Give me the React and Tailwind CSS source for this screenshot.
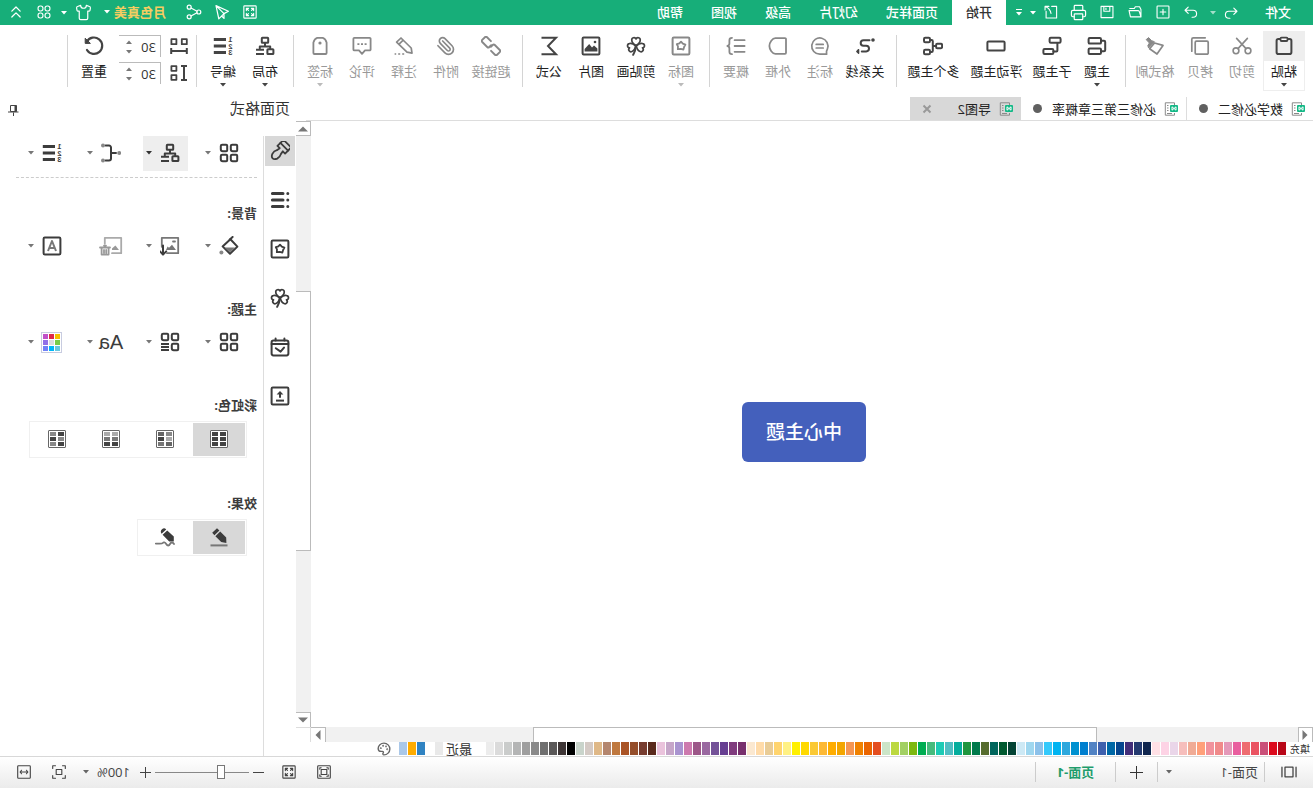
import React, { useState } from 'react'
import clsx from 'clsx'
import { Printer, Shirt, ChevronsUp, Paperclip, Palette } from 'lucide-react'

// ---------- icons (20x20 grid) ----------

function Svg({ children, sw = 2, className = 'size-5' }) {
  return (
    <svg viewBox="0 0 20 20" className={clsx('shrink-0', className)} fill="none" stroke="currentColor" strokeWidth={sw} strokeLinecap="round" strokeLinejoin="round" aria-hidden="true">
      {children}
    </svg>
  )
}

function Caret({ className = 'text-[#444]' }) {
  return (
    <svg viewBox="0 0 6 4" className={clsx('w-1.5 h-1 shrink-0', className)} fill="currentColor" aria-hidden="true">
      <path d="M0 0h6L3 3.5z" />
    </svg>
  )
}

const HEART = 'M10 9.4C7.4 8 5.8 6.200 5.800 4.200A2.200 2.200 0 0 1 10 3a2.200 2.200 0 0 1 4.200 1.200c0 2-1.600 3.800-4.200 5.200z'
const FLOWER = 'M10 6.4l1.3 1.5 2 .5-1 1.7.1 2-2.4-.2-1.9 1-.7-2.1-1.2-1.7 2.2-.9z'
const TILE = 'q0-1 1-1h4q1.400 0 1.400 1.200v3.200q0 2-2 2h-3.400q-1 0-1-1z'
const CHAIN = 'M6.500 13.400H1a1.500 1.500 0 0 1-1.500-1.500V8.100A1.500 1.500 0 0 1 1 6.600h7a1.500 1.500 0 0 1 1.500 1.500v2.600'

const ICONS = {
  paste: <Svg><rect x="2.6" y="3" width="14.8" height="15" rx="1.8" /><rect x="6.5" y="1.6" width="7" height="3.4" rx="1" fill="white" strokeWidth="1.8" /></Svg>,
  cut: <Svg sw={1.6}><circle cx="4" cy="14.8" r="2.9" /><circle cx="16" cy="14.8" r="2.9" /><path d="M6 12.6L15.4 2.4M14 12.6L4.6 2.4" /></Svg>,
  copy: <Svg sw={1.7}><rect x="1.8" y="5.2" width="13" height="13" rx="1.2" /><path d="M4.8 1.8h11.9a1.5 1.5 0 0 1 1.5 1.5v11.9" /></Svg>,
  brush: <Svg sw={1.7}><path d="M10.5 7L2 9.400 8 18l7.400-5.200z" /><path d="M10.800 6l5.600 6 .8-2.400-1.600-2.600L18.800 3.600 16.400 1.600 13.600 4.400z" fill="currentColor" strokeWidth="1" /></Svg>,
  topic: <Svg><rect x="6" y="2" width="12.4" height="5.6" rx="1.2" /><rect x="6" y="12.4" width="12.4" height="5.6" rx="1.2" /><path d="M6 4.8H3a1.2 1.2 0 0 0-1.2 1.2v8a1.2 1.2 0 0 0 1.2 1.2h3" /></Svg>,
  subtopic: <Svg><rect x="1.4" y="1.8" width="11" height="5" rx="1.2" /><rect x="8.6" y="13" width="10" height="5" rx="1.2" /><path d="M4.6 7v7.4a1 1 0 0 0 1 1h3" /></Svg>,
  floating: <Svg><rect x="1.4" y="5.4" width="17.2" height="9.2" rx="1.2" /></Svg>,
  multi: <Svg><rect x=".9" y="7.8" width="6" height="4.4" rx="1.2" /><rect x="13" y="1.8" width="6" height="4.4" rx="1.2" /><rect x="13" y="13.8" width="6" height="4.4" rx="1.2" /><path d="M7 10h3.2M13 4h-1.6a1.2 1.2 0 0 0-1.2 1.2v9.6A1.2 1.2 0 0 0 11.4 16H13" /></Svg>,
  relation: <Svg><path d="M5.500 4.2h6a2.8 2.8 0 0 1 0 5.6H8.8a2.8 2.8 0 0 0 0 5.6h4.4" /><circle cx="2" cy="4" r="1" fill="currentColor" strokeWidth="1.600" /><path d="M16.4 13.6l1.8 1.8-1.8 1.8z" fill="currentColor" strokeWidth="1.4" /></Svg>,
  callout: <Svg sw={1.7}><path d="M3.4 18.2h6.8a8.1 8.1 0 1 0-7.6-5.2c.4 1.2.9 1.6.9 2.8z" /><path d="M6.8 8.4h7M6.8 12h7" /></Svg>,
  boundary: <Svg sw={1.8}><path d="M3 2.2h9.600c3 0 6 4.200 6 7.800s-3 7.800-6 7.800H3a1 1 0 0 1-1-1V3.200a1 1 0 0 1 1-1z" /></Svg>,
  summary: <Svg sw={1.8}><path d="M1.4 4.2h10M1.4 10h10M1.4 15.800h10M14 1.800c2.200 0 2.600.8 2.600 2.400v3.400c0 1.400.6 2.200 2 2.400-1.400.2-2 1-2 2.400v3.400c0 1.600-.4 2.400-2.600 2.400" /></Svg>,
  flowerBox: <Svg><rect x="1.600" y="1.600" width="16.800" height="16.800" rx="1.200" /><path d="M10 5.600l1.600 1.800 2.600.8-1.200 2.200.2 2.800-3-.4-2.600.8-.8-2.800L5.600 8.600l2.600-1z" strokeWidth="1.800" /></Svg>,
  clover: <Svg sw={1.7}><path d={HEART} /><path d={HEART} transform="rotate(-108 10 9.800)" /><path d={HEART} transform="rotate(108 10 9.800)" /><path d="M10 10c.4 3.600 1.200 6.200 2.800 8.800" strokeWidth="2" /></Svg>,
  picture: <Svg><rect x="1.600" y="1.600" width="16.800" height="16.800" rx="1" /><path d="M3.600 15.500v-3L7 9.500l2 2 2.800-3.500 4.600 5v2.500z" fill="currentColor" stroke="none" /><circle cx="6" cy="6" r="1.300" fill="currentColor" stroke="none" /></Svg>,
  formula: <Svg><path d="M17.500 1.800H3l8 8.200-8 8.200h14.500" strokeLinejoin="miter" strokeLinecap="butt" /></Svg>,
  link: <Svg sw={1.9}><g transform="rotate(-45 10 10)"><path d={CHAIN} /><path d={CHAIN} transform="rotate(180 10 10)" /></g></Svg>,
  note: <Svg sw={1.7}><path d="M2 17.200l.8-5.200L13 2l4.400 4.200L7 16.200zM10.800 4.200l4.400 4.200" /><path d="M9.800 18h9.600" strokeDasharray="2 2" strokeLinecap="butt" /></Svg>,
  comment: <Svg sw={1.8}><path d="M2.400 1.800h15.200a1 1 0 0 1 1 1v10.600a1 1 0 0 1-1 1H13l-3 3.400-3-3.400H2.400a1 1 0 0 1-1-1V2.800a1 1 0 0 1 1-1z" /><path d="M5.400 8.200h2M9 8.200h2M12.600 8.200h2" strokeLinecap="butt" /></Svg>,
  tag: <Svg sw={1.8}><path d="M3.400 17V6.400c.8-2.600 2-4 3.800-4.600h5.600c1.800.6 3 2 3.800 4.600V17a1 1 0 0 1-1 1H4.400a1 1 0 0 1-1-1z" /><circle cx="10" cy="7" r="1.600" fill="currentColor" stroke="none" /></Svg>,
  layout: <Svg><rect x="6.800" y="1.800" width="6.400" height="5" rx=".6" /><path d="M10 7v3M4.800 12.600V10.600h10.400v2" /><rect x="1.600" y="13.200" width="6" height="4.800" rx=".6" /><path d="M11 13.800h8M11 18h8" strokeLinecap="butt" /></Svg>,
  numbering: (
    <Svg>
      <path d="M7 3.500h12.200M7 10h12.200M7 16.500h12.200" strokeWidth="3" strokeLinecap="butt" />
      <g fill="currentColor" stroke="none" fontSize="7.500" fontFamily="Liberation Sans" fontWeight="bold">
        <text x="0.500" y="6">1</text><text x="0.500" y="12.800">2</text><text x="0.500" y="19.400">3</text>
      </g>
    </Svg>
  ),
  hgap: <Svg><rect x="2.200" y="3.200" width="5" height="5" strokeWidth="1.800" /><rect x="12.600" y="3.200" width="5" height="5" strokeWidth="1.800" /><path d="M2.200 15h15.600M2.200 12v6M17.800 12v6" strokeLinecap="butt" /></Svg>,
  vgap: <Svg><path d="M5 3.600v13M2 3h6M2 17h6" strokeLinecap="butt" /><rect x="12.600" y="3.200" width="5" height="4.600" strokeWidth="1.800" /><rect x="12.600" y="12.200" width="5" height="4.600" strokeWidth="1.800" /></Svg>,
  reset: <Svg><path d="M17 14a8.200 8.200 0 1 1 .2-8.200" strokeWidth="2.200" /><path d="M18.800 2.600v4.800h-4.800z" fill="currentColor" strokeWidth="1" /></Svg>,
  // side panel
  brushBig: <Svg sw={1.8}><g transform="rotate(-45 10 10)"><path d="M4.600-.4h10.800v8.600h-3.200l.6 3.400q1.600 2.600.6 5.800-1.200 3-3.400 3t-3.400-3q-1-3.200.6-5.800l.6-3.400H4.600z" /><path d="M4.600 4h10.800" /></g></Svg>,
  outline: <Svg><path d="M7 3.400h10.600M7 10h10.600M7 16.600h10.600" strokeWidth="3" /><path d="M2.200 3.400h.01M2.200 10h.01M2.200 16.600h.01" strokeWidth="3" /></Svg>,
  calendar: <Svg><rect x="1.600" y="3.600" width="16.800" height="14.800" rx="1.800" /><path d="M1.600 7h16.800M5.600 1.400v2M14.400 1.400v2M6 10.600l3.400 4 4.800-3.400" /></Svg>,
  upload: <Svg><rect x="1.600" y="1.600" width="16.800" height="16.800" rx="1.200" /><path d="M6 14.600h8" strokeLinecap="butt" /><path d="M10 11.800V7" strokeLinecap="butt" /><path d="M6.600 8.600L10 5l3.400 3.600z" fill="currentColor" stroke="none" /></Svg>,
  tiles: <Svg>{[[1.800, 1.800], [11.800, 1.800], [1.800, 11.800], [11.800, 11.800]].map(([x, y], i) => <path key={i} d={`M${x} ${y + 1}${TILE}`} />)}</Svg>,
  tilesList: <Svg>{[[1.800, 1.800], [11.800, 1.800], [1.800, 11.800]].map(([x, y], i) => <path key={i} d={`M${x} ${y + 1}${TILE}`} />)}<path d="M11 12h8M11 15h8M11 18h8" strokeLinecap="butt" strokeWidth="1.800" /></Svg>,
  branch: <Svg><circle cx="1.800" cy="10" r="2" fill="#888" stroke="none" /><path d="M5 10h5M15.400 2.600H12a2 2 0 0 0-2 2v10.800a2 2 0 0 0 2 2h3.400" /><circle cx="18" cy="2.600" r="2" fill="#888" stroke="none" /><circle cx="18" cy="17.400" r="2" fill="#888" stroke="none" /></Svg>,
  fill: <Svg><path d="M8.600 3.200l7.800 7.200-7.400 7.400L1.600 10.600z" /><path d="M4 11.600h10.600L9 16.600z" fill="#777" stroke="none" /><path d="M9.200 3.600L6.400 1" /><circle cx="17.600" cy="16.600" r="2" fill="#888" stroke="none" /></Svg>,
  bgImport: <Svg sw={1.8}><path d="M13 17.200H1.800V1.800h16.400v9" stroke="#777" /><path d="M4 14l4-5.200 3 3 1.400-1.200 1.600 3.400z" fill="#777" stroke="none" /><path d="M5 5.500h2" stroke="#777" /><path d="M17 9.500v8.600M13.800 15.400l3.200 3.200 3-3.200" strokeWidth="2" /></Svg>,
  bgDelete: <Svg sw={1.800} className="h-5 w-6 text-[#999]"><path d="M9 17.200H-.2V1.800h16.400v6" stroke="#aaa" /><path d="M2 14l3.600-4.600 3.400 3V14z" fill="#999" stroke="none" /><path d="M11 11.500h10M12.400 12v6.600h7V12M14.800 14v3M17 14v3M15 9.600h2" /></Svg>,
  letterBox: <Svg><rect x="1.600" y="1.600" width="16.800" height="16.800" rx="1.200" /><path d="M6 15l4-10 4 10M7.400 12h5.200" stroke="#777" strokeLinecap="butt" /></Svg>,
  pen: <Svg><path d="M2.600 16l.2-5.600L8.800 4.400l4.800 4.800L7.800 15z M9.600 3.400L12 1.200l4.800 4.600-2.200 2.400z" fill="currentColor" stroke="none" /><path d="M1.500 18.400h17" stroke="#777" strokeLinecap="butt" /></Svg>,
  pencil: <Svg><path d="M1.200 14.400V9.600L7.800 3.400l4.600 4.400L5.800 14.400zM8.800 2.400q2-2.200 4.200-.2t.4 4.600z" fill="currentColor" stroke="none" /><path d="M1 17c1.200-2 3-2 4 0s2.600 2 3.800 0 2.600-2 3.400-1 2 .6 7 .6" stroke="#777" strokeWidth="1.800" /></Svg>,
  // title bar
  undo: <Svg sw={1.6}><path d="M6 3L1.500 7.500 6 12M2 7.500h11a5 5 0 0 1 0 10h-1.500" /></Svg>,
  redo: <Svg sw={1.6}><path d="M14 3l4.500 4.500L14 12M18 7.500H7a5 5 0 0 0 0 10h1.500" /></Svg>,
  add: <Svg sw={1.6}><rect x="1.500" y="1.500" width="17" height="17" rx="1" /><path d="M10 6v8M6 10h8" /></Svg>,
  folder: <Svg sw={1.6}><path d="M1.500 17V6.500l2-4h6l1.500 2.500h6.500M1.500 17h15l2-9h-13q-1.500 0-2 2z" /></Svg>,
  save: <Svg sw={1.6}><path d="M1.500 2h17v16h-17zM6 2v7h8.500V2M11.500 4.500v2" /></Svg>,
  exportDoc: <Svg sw={1.6}><path d="M9 2H2v16.500h15V9M13 2h5.500v5M18 2.500C13 4 11 7 10 12" /></Svg>,
  fit: <Svg sw={1.6}><rect x="1.200" y="1.200" width="17.600" height="17.600" rx="1" /><path d="M4.800 8V4.800H8M12 4.800h3.200V8M15.200 12v3.200H12M8 15.200H4.800V12M5 5l2.800 2.800M15 5l-2.800 2.800M15 15l-2.800-2.800M5 15l2.800-2.800" /></Svg>,
  send: <Svg sw={1.500}><path d="M17.500 2L2 9l5.500 3L14 18.500zM17.500 2L7.500 12v6l3-3" /></Svg>,
  share: <Svg sw={1.500}><circle cx="4" cy="10" r="2.500" /><circle cx="16" cy="4" r="2.500" /><circle cx="16" cy="16" r="2.500" /><path d="M6.200 9L13.800 5M6.200 11l7.600 4" /></Svg>,
  apps: <Svg sw={1.6}><rect x="1.500" y="1.500" width="7" height="7" rx="3" /><rect x="11.500" y="1.500" width="7" height="7" rx="3" /><rect x="1.500" y="11.500" width="7" height="7" rx="3" /><rect x="11.500" y="11.500" width="7" height="7" rx="3" /></Svg>,
  // status bar
  columns: <Svg sw={1.6}><rect x="5" y="4" width="10" height="12" /><path d="M1.200 4v12M18.800 4v12" /></Svg>,
  presentation: <Svg sw={1.6}><rect x="1" y="1" width="18" height="18" rx="1" /><rect x="6" y="6.500" width="8" height="7" /><path d="M4 6V4h2M14 4h2v2M16 14v2h-2M6 16H4v-2" /></Svg>,
  fitPage: <Svg sw={1.6}><rect x="6" y="6.500" width="8" height="7" /><path d="M1 5V1h4M15 1h4v4M19 15v4h-4M5 19H1v-4" /></Svg>,
  fitWidth: <Svg sw={1.6}><rect x="1" y="1" width="18" height="18" rx="1" /><path d="M4.500 10h11M6.500 7.500L4.500 10l2 2.500M13.500 7.500l2 2.500-2 2.500" /></Svg>,
}

function SizedIcon({ name, className }) {
  return <span className={clsx('flex items-center justify-center [&>svg]:size-full', className)}>{ICONS[name]}</span>
}

// ---------- data ----------

const QUICK = [
  { icon: 'add', label: '新建' },
  { icon: 'folder', label: '打开' },
  { icon: 'save', label: '保存' },
  { icon: 'print', label: '打印' },
  { icon: 'exportDoc', label: '导出' },
]

const MENUS = ['开始', '页面样式', '幻灯片', '高级', '视图', '帮助']

const RIBBON = [
  [
    { icon: 'paste', label: '粘贴', caret: true, boxed: true },
    { icon: 'cut', label: '剪切', off: true },
    { icon: 'copy', label: '拷贝', off: true },
    { icon: 'brush', label: '格式刷', off: true },
  ],
  [
    { icon: 'topic', label: '主题', caret: true },
    { icon: 'subtopic', label: '子主题' },
    { icon: 'floating', label: '浮动主题' },
    { icon: 'multi', label: '多个主题' },
  ],
  [
    { icon: 'relation', label: '关系线' },
    { icon: 'callout', label: '标注', off: true },
    { icon: 'boundary', label: '外框', off: true },
    { icon: 'summary', label: '概要', off: true },
  ],
  [
    { icon: 'flowerBox', label: '图标', caret: true, off: true },
    { icon: 'clover', label: '剪贴画' },
    { icon: 'picture', label: '图片' },
    { icon: 'formula', label: '公式' },
  ],
  [
    { icon: 'link', label: '超链接', off: true },
    { icon: 'clip', label: '附件', off: true },
    { icon: 'note', label: '注释', off: true },
    { icon: 'comment', label: '评论', off: true },
    { icon: 'tag', label: '标签', caret: true, off: true },
  ],
  [
    { icon: 'layout', label: '布局', caret: true },
    { icon: 'numbering', label: '编号', caret: true },
  ],
]

const SIDE = [
  { icon: 'brushBig', label: '样式' },
  { icon: 'outline', label: '大纲' },
  { icon: 'flowerBox', label: '图标' },
  { icon: 'clover', label: '剪贴画' },
  { icon: 'calendar', label: '任务' },
  { icon: 'upload', label: '导出' },
]

const COLORS = [
  '#b80718', '#dc0a1c', '#ca5079', '#ea5362', '#ee6c70', '#e95f9f', '#e499b9', '#f08a8a', '#f1929c', '#ffa07a',
  '#f0ab95', '#f6bebc', '#ead6e9', '#fdd3e5', '#ffe0e5', '#10264f', '#243a70', '#422e79', '#06468e', '#0068a6',
  '#3f61ae', '#5283c4', '#007fcf', '#0091d0', '#2ea8dd', '#00b4f1', '#34c9fb', '#8cc1ea', '#9fd7ef', '#cde9f5',
  '#034435', '#005a30', '#00665c', '#566c2e', '#007a4b', '#1f963e', '#04ad9d', '#50bec3', '#1dcbb5', '#46bb7d',
  '#00ad52', '#7db80f', '#a2d063', '#bcd840', '#cce5c8', '#e44e20', '#ea6500', '#f08200', '#f59652', '#f3a600',
  '#ffad00', '#fdb935', '#fbc934', '#ffd900', '#fff000', '#fff184', '#ffd46e', '#e9cc96', '#ffdba9', '#fbe8d0',
  '#78306d', '#803c7e', '#683f92', '#745298', '#9a69a0', '#9c5788', '#cd7aae', '#a994d0', '#c6a6c9', '#eac3dc',
  '#5a2a1c', '#773c2f', '#954e2b', '#aa5426', '#bf783f', '#b4866e', '#dfb887', '#d4cac5', '#c9d4cb', '#000000',
  '#3e3636', '#5a5858', '#707070', '#8a8a8a', '#9f9f9f', '#b4b5b5', '#cacccb', '#dbdbdb', '#ececec',
]

const RAINBOW = [
  ['#444', '#444', '#444', '#444', '#444', '#444'],
  ['#888', '#666', '#aaa', '#444', '#666', '#777'],
  ['#aaa', '#aaa', '#777', '#777', '#444', '#444'],
  ['#444', '#888', '#888', '#444', '#444', '#888'],
]

// ---------- pieces ----------

function TitleBar() {
  const [menu, setMenu] = useState('开始')
  const iconBtn = 'flex h-full w-7 items-center justify-center pb-px'
  return (
    <header className="flex h-[25px] items-center bg-[#17ae79] text-[13px] leading-4 text-white">
      <button className="h-full pb-0.5 pl-[22px] pr-6 font-medium">文件</button>
      <button aria-label="撤销" className="flex w-5 items-center justify-center"><SizedIcon name="undo" className="size-[14px]" /></button>
      <button aria-label="撤销列表" className="flex w-4 justify-center"><Caret className="text-white/60" /></button>
      <button aria-label="重做" className={iconBtn}><SizedIcon name="redo" className="size-[14px]" /></button>
      {QUICK.map(q => (
        <button key={q.icon} aria-label={q.label} className={iconBtn}>
          {q.icon === 'print' ? <Printer className="size-[17px]" strokeWidth={1.7} /> : <SizedIcon name={q.icon} className="size-[14px]" />}
        </button>
      ))}
      <button aria-label="更多导出" className="flex w-2 justify-center"><Caret className="text-white" /></button>
      <button aria-label="自定义" className="flex w-5 flex-col items-center gap-0.5">
        <span className="h-px w-1.5 bg-white" />
        <Caret className="text-white" />
      </button>
      <nav className="ml-[3px] flex h-full">
        {MENUS.map(m => (
          <button key={m} onClick={() => setMenu(m)} className={clsx('px-3.5 pb-0.5 font-medium', m === menu && 'bg-white text-[#333]')}>{m}</button>
        ))}
      </nav>
      <div className="ml-auto flex h-full items-center pr-0.5">
        <button aria-label="全屏" className={iconBtn}><SizedIcon name="fit" className="size-[14px]" /></button>
        <button aria-label="发送" className={iconBtn}><SizedIcon name="send" className="size-4" /></button>
        <button aria-label="分享" className={iconBtn}><SizedIcon name="share" className="size-4" /></button>
        <button className="flex items-center gap-1 pb-0.5 pl-3.5 pr-1.5 font-bold text-[#f6cd61]">月色真美<Caret className="text-white" /></button>
        <button aria-label="主题皮肤" className={iconBtn}><Shirt className="size-[17px]" strokeWidth={1.7} /></button>
        <button aria-label="皮肤列表" className="flex w-3 justify-center"><Caret className="text-white" /></button>
        <button aria-label="应用" className={iconBtn}><SizedIcon name="apps" className="size-[14px]" /></button>
        <button aria-label="收起" className={iconBtn}><ChevronsUp className="size-5" strokeWidth={1.5} /></button>
      </div>
    </header>
  )
}

function Separator() {
  return <div className="ml-[5px] mr-[7px] mt-1 h-[52px] w-px bg-[#d4d4d4]" />
}

function RibbonButton({ icon, label, caret, boxed, off }) {
  const width = label.length === 2 ? 'w-[42px]' : label.length === 3 ? 'w-12' : 'w-[63px]'
  return (
    <button className={clsx('flex h-[60px] shrink-0 flex-col items-center', width, off ? 'text-[#888]' : 'text-[#444]', boxed && 'outline outline-1 -outline-offset-1 outline-[#eee]')}>
      <span className={clsx('flex h-[30px] w-full shrink-0 items-center justify-center', boxed && 'bg-[#eee]')}>
        {icon === 'clip' ? <Paperclip className="size-5" strokeWidth={2} /> : ICONS[icon]}
      </span>
      <span className={clsx('mt-0.5 whitespace-nowrap text-[13px] leading-4', off ? 'text-[#999]' : 'text-[#222]')}>{label}</span>
      {caret && <Caret className={clsx('mt-1', off ? 'text-[#bbb]' : 'text-[#444]')} />}
    </button>
  )
}

function SpacingField({ icon, label }) {
  const [value, setValue] = useState(30)
  return (
    <label className="flex items-center gap-2 text-[#444]">
      {ICONS[icon]}
      <span className="flex h-[22px] w-[42px] border-l border-t border-[#bbb]">
        <input aria-label={label} value={value} onChange={e => setValue(Number(e.target.value) || 0)} className="w-7 pl-1 text-[13px] leading-4 text-[#333] outline-none" />
        <span className="flex flex-col justify-center gap-1.5">
          <button aria-label="增加" onClick={() => setValue(value + 1)} className="rotate-180"><Caret className="text-[#777]" /></button>
          <button aria-label="减少" onClick={() => setValue(value - 1)}><Caret className="text-[#777]" /></button>
        </span>
      </span>
    </label>
  )
}

function Ribbon() {
  return (
    <div className="flex py-1.5 pl-2">
      {RIBBON.map((group, i) => (
        <React.Fragment key={i}>
          {group.map(b => <RibbonButton key={b.label} {...b} />)}
          <Separator />
        </React.Fragment>
      ))}
      <div className="mr-1 mt-1 flex flex-col gap-[5px]">
        <SpacingField icon="hgap" label="水平间距" />
        <SpacingField icon="vgap" label="垂直间距" />
      </div>
      <RibbonButton icon="reset" label="重置" />
      <Separator />
    </div>
  )
}

function DocIcon() {
  return (
    <svg viewBox="0 0 14 14" className="size-3.5 shrink-0" fill="none" aria-hidden="true">
      <path d="M3.500 3V.8h9.200v12.400H3.500V11" stroke="#8a8a8a" />
      <path d="M9.500 3.500H11M9.500 6H11M9.500 8.500H11M6 11.500h5" stroke="#8a8a8a" />
      <rect x="0" y="3" width="8" height="7" rx="1" fill="#12b886" />
      <path d="M2 4.800l4 3.400M2 8.200l4-3.400M2 4.800v3.400M6 4.800v3.400" stroke="#fff" />
    </svg>
  )
}

function DocTabs() {
  const tab = 'flex items-center pl-2 gap-2 whitespace-nowrap'
  const dot = <span className="ml-0.5 size-[9px] rounded-full bg-[#606060]" />
  return (
    <div className="mr-2.5 flex h-6 border-b border-[#ddd] text-[13px] leading-4 text-[#222]">
      <button className={clsx(tab, 'border-r border-[#ddd] pr-3')}><DocIcon />数学必修二{dot}</button>
      <button className={clsx(tab, 'pr-3')}><DocIcon />必修三第三章概率{dot}</button>
      <div className={clsx(tab, 'bg-[#d8d8d8] pr-3')}>
        <DocIcon />
        <button>导图2</button>
        <button aria-label="关闭" className="ml-[18px] text-[#999]">
          <svg viewBox="0 0 10 10" className="size-2.5" stroke="currentColor" strokeWidth="2" aria-hidden="true"><path d="M1.500 1.500l7 7M8.500 1.500l-7 7" /></svg>
        </button>
      </div>
    </div>
  )
}

function ScrollArrow({ dir }) {
  const d = { up: 'M0 7.500h10L5 2.500z', down: 'M0 2.500h10L5 7.500z', left: 'M7.500 0v10L2.500 5z', right: 'M2.500 0v10L7.500 5z' }[dir]
  return <svg viewBox="0 0 10 10" className="size-2.5" fill="#777" aria-hidden="true"><path d={d} /></svg>
}

function Canvas() {
  const btn = 'flex size-[15px] shrink-0 items-center justify-center bg-white'
  return (
    <>
      <div className="flex flex-1">
        <div className="relative flex-1">
          <div className="absolute left-[447px] top-[281px] rounded-md bg-[#4460bc] px-6 py-[18px] text-[19px] font-medium leading-6 text-white">中心主题</div>
        </div>
        <div className="flex w-[15px] flex-col bg-[#f1f1f1]">
          <button aria-label="向上" className={clsx(btn, 'border-b border-l border-t border-[#bbb]')}><ScrollArrow dir="up" /></button>
          <div className="grow-[156]" />
          <div className="grow-[258] border-y border-l border-[#bbb] bg-white" />
          <div className="grow-[162]" />
          <button aria-label="向下" className={clsx(btn, 'border-l border-t border-[#bbb]')}><ScrollArrow dir="down" /></button>
        </div>
      </div>
      <div className="flex h-[15px] bg-[#f1f1f1]">
        <button aria-label="向左" className={clsx(btn, 'border-x border-t border-[#bbb]')}><ScrollArrow dir="left" /></button>
        <div className="grow-[201]" />
        <div className="grow-[564] border-x border-t border-[#bbb] bg-white" />
        <div className="grow-[207]" />
        <button aria-label="向右" className={clsx(btn, 'border-l border-t border-[#bbb]')}><ScrollArrow dir="right" /></button>
        <div className="w-[15px] border-l border-t border-[#ddd] bg-white" />
      </div>
    </>
  )
}

function Swatch({ color }) {
  return <button aria-label={color} className="h-[13px] w-2 shrink-0" style={{ backgroundColor: color }} />
}

function ColorStrip() {
  return (
    <div className="flex h-3.5 items-start text-[#333]">
      <span className="w-[27px] shrink-0 pl-[3px] text-[10px] leading-[14px]">填充</span>
      <div className="flex gap-px">{COLORS.map((c, i) => <Swatch key={i} color={c} />)}</div>
      <span className="ml-3.5 mr-[3px] shrink-0 text-[13px] leading-[14px]">最近</span>
      <Swatch color="#e9e9e9" />
      <div className="ml-2.5 flex gap-px">
        <Swatch color="#3083c2" /><Swatch color="#ffac00" /><Swatch color="#aac8e9" />
      </div>
      <button aria-label="调色板" className="ml-2 text-[#666]"><Palette className="size-3.5" strokeWidth={2.4} /></button>
    </div>
  )
}

function PanelCell({ children, active, caret = true }) {
  return (
    <button className={clsx('flex h-[35px] w-[45px] items-center pb-px pl-2', active && 'bg-[#eee]')}>
      <span className="flex w-5 items-center justify-center">{children}</span>
      {caret && <Caret className={clsx('ml-2', active ? 'text-[#333]' : 'text-[#777]')} />}
    </button>
  )
}

function Section({ title, children }) {
  return (
    <section className="mt-[37px] first-of-type:mt-[27px]">
      <h3 className="mb-2 pl-1.5 text-[13px] font-bold leading-4">{title}</h3>
      <div className="flex pl-4">{children}</div>
    </section>
  )
}

function ThemeGrid() {
  const colors = ['#f5c000', '#e0284a', '#c050c8', '#78cc48', '#dddddd', '#9070e8', '#68c8e0', '#00b8f8', '#7080f8']
  return (
    <svg viewBox="0 0 21 21" className="size-[21px] shrink-0" aria-hidden="true">
      <rect x=".5" y=".5" width="20" height="20" fill="#fff" stroke="#c8cce0" />
      {colors.map((c, i) => <rect key={c} x={2 + (i % 3) * 6} y={2 + Math.floor(i / 3) * 6} width="5" height="5" fill={c} />)}
    </svg>
  )
}

function RainbowIcon({ cells }) {
  return (
    <svg viewBox="0 0 18 18" className="size-[18px]" aria-hidden="true">
      <rect x=".5" y=".5" width="17" height="17" rx=".5" fill="#fff" stroke="#666" />
      {cells.map((c, i) => <rect key={i} x={i % 2 ? 10 : 2} y={2 + Math.floor(i / 2) * 5} width="6" height="4" fill={c} />)}
    </svg>
  )
}

function FormatPanel() {
  const [side, setSide] = useState(0)
  const [rainbow, setRainbow] = useState(0)
  const [effect, setEffect] = useState(0)
  const seg = 'flex gap-0.5 border border-[#f0f0f0] p-px'
  const segBtn = 'flex h-[33px] w-[52px] items-center justify-center pb-px'
  return (
    <aside className="flex w-[296px] shrink-0 flex-col text-[#3c3c3c]">
      <div className="flex h-[39px] items-start justify-between px-1.5 pt-px">
        <h2 className="text-[15px] leading-5 text-[#333]">页面格式</h2>
        <button aria-label="固定" className="mt-1.5">
          <svg viewBox="0 0 14 14" className="size-3.5" fill="none" stroke="#444" aria-hidden="true"><path d="M3.500 1.500h6v6h-6zM1.500 8h10.500M6.500 8.500V12" /><path d="M4.500 1.500v6" strokeWidth="2" /></svg>
        </button>
      </div>
      <div className="flex flex-1">
        <div className="flex w-8 flex-col items-center gap-[19px]">
          {SIDE.map((s, i) => (
            <button key={s.icon} aria-label={s.label} onClick={() => setSide(i)} className={clsx('flex size-[30px] items-center justify-center', i === side && 'bg-[#d8d8d8]')}>
              {ICONS[s.icon]}
            </button>
          ))}
        </div>
        <div className="flex-1 border-l border-[#ddd]">
          <div className="flex gap-3.5 pl-4">
            <PanelCell>{ICONS.tiles}</PanelCell>
            <PanelCell active>{ICONS.layout}</PanelCell>
            <PanelCell>{ICONS.branch}</PanelCell>
            <PanelCell>{ICONS.numbering}</PanelCell>
          </div>
          <div className="ml-1.5 mr-4 mt-1.5 border-t border-dashed border-[#ccc]" />
          <Section title="背景:">
            <div className="flex gap-3.5">
              <PanelCell>{ICONS.fill}</PanelCell>
              <PanelCell>{ICONS.bgImport}</PanelCell>
              <PanelCell caret={false}>{ICONS.bgDelete}</PanelCell>
              <PanelCell>{ICONS.letterBox}</PanelCell>
            </div>
          </Section>
          <Section title="主题:">
            <div className="flex gap-3.5">
              <PanelCell>{ICONS.tiles}</PanelCell>
              <PanelCell>{ICONS.tilesList}</PanelCell>
              <PanelCell><span className="font-['Liberation_Sans',sans-serif] text-[20px] leading-6">Aa</span></PanelCell>
              <PanelCell><ThemeGrid /></PanelCell>
            </div>
          </Section>
          <Section title="彩虹色:">
            <div className={seg}>
              {RAINBOW.map((cells, i) => (
                <button key={i} aria-label={`彩虹色 ${i + 1}`} onClick={() => setRainbow(i)} className={clsx(segBtn, i === rainbow && 'bg-[#d8d8d8]')}><RainbowIcon cells={cells} /></button>
              ))}
            </div>
          </Section>
          <Section title="效果:">
            <div className={seg}>
              {['pen', 'pencil'].map((name, i) => (
                <button key={name} aria-label={name} onClick={() => setEffect(i)} className={clsx(segBtn, i === effect && 'bg-[#d8d8d8]')}>{ICONS[name]}</button>
              ))}
            </div>
          </Section>
        </div>
      </div>
    </aside>
  )
}

function StatusBar() {
  const [zoom, setZoom] = useState(28)
  const divider = <div className="h-5 w-px bg-[#ccc]" />
  return (
    <footer className="flex h-8 items-center border-t border-[#d8d8d8] bg-linear-to-b from-white to-[#ebebeb] pb-px text-[13px] leading-4 text-[#444]">
      <button aria-label="页面列表" className="flex w-12 justify-center"><SizedIcon name="columns" className="size-4" /></button>
      {divider}
      <button className="flex w-[106px] items-center justify-between pl-1.5 pr-2">页面-1<Caret className="text-[#666]" /></button>
      {divider}
      <button aria-label="添加页面" className="flex w-[41px] justify-center">
        <svg viewBox="0 0 13 13" className="size-[13px]" stroke="#333" aria-hidden="true"><path d="M6.500 0v13M0 6.500h13" /></svg>
      </button>
      {divider}
      <button className="w-[79px] font-bold text-[#1f9d6c]">页面-1</button>
      {divider}
      <div className="ml-auto flex items-center pr-[17px]">
        <button aria-label="演示"><SizedIcon name="presentation" className="size-3.5" /></button>
        <button aria-label="全屏" className="ml-[21px]"><SizedIcon name="fit" className="size-3.5" /></button>
        <button aria-label="缩小" className="ml-[18px]">
          <svg viewBox="0 0 11 11" className="size-[11px]" stroke="#444" aria-hidden="true"><path d="M0 5.500h11" /></svg>
        </button>
        <input
          type="range"
          aria-label="缩放"
          value={zoom}
          onChange={e => setZoom(Number(e.target.value))}
          className="mx-1 h-4 w-[94px] appearance-none bg-linear-to-b from-[#888] to-[#888] bg-[length:100%_1px] bg-center bg-no-repeat [&::-webkit-slider-thumb]:h-[14px] [&::-webkit-slider-thumb]:w-2 [&::-webkit-slider-thumb]:appearance-none [&::-webkit-slider-thumb]:border [&::-webkit-slider-thumb]:border-[#777] [&::-webkit-slider-thumb]:bg-white"
        />
        <button aria-label="放大">
          <svg viewBox="0 0 11 11" className="size-[11px]" stroke="#444" aria-hidden="true"><path d="M5.500 0v11M0 5.500h11" /></svg>
        </button>
        <button className="ml-2.5 flex items-center gap-2">100%<Caret className="text-[#666]" /></button>
        <button aria-label="适应页面" className="ml-[17px]"><SizedIcon name="fitPage" className="size-3.5" /></button>
        <button aria-label="适应宽度" className="ml-[21px]"><SizedIcon name="fitWidth" className="size-3.5" /></button>
      </div>
    </footer>
  )
}

// the whole window is shown mirrored left to right
function App() {
  return (
    <div className="flex min-h-screen -scale-x-100 flex-col overflow-hidden bg-white font-['Open_Sans','Noto_Sans_CJK_SC',sans-serif]">
      <TitleBar />
      <Ribbon />
      <main className="flex flex-1">
        <div className="flex min-w-0 flex-1 flex-col">
          <DocTabs />
          <Canvas />
          <ColorStrip />
        </div>
        <FormatPanel />
      </main>
      <StatusBar />
    </div>
  )
}

export default App
